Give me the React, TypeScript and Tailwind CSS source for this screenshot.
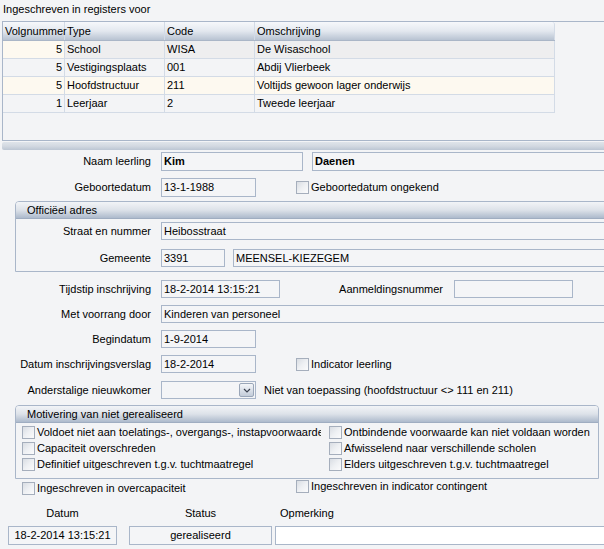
import React from 'react';

interface RegisterRow {
  nr: number;
  type: string;
  code: string;
  oms: string;
}

const registers: RegisterRow[] = [
  { nr: 5, type: 'School', code: 'WISA', oms: 'De Wisaschool' },
  { nr: 5, type: 'Vestigingsplaats', code: '001', oms: 'Abdij Vlierbeek' },
  { nr: 5, type: 'Hoofdstructuur', code: '211', oms: 'Voltijds gewoon lager onderwijs' },
  { nr: 1, type: 'Leerjaar', code: '2', oms: 'Tweede leerjaar' },
];

const box = 'border border-[#a9b6c9] bg-[#f4f5f7] flex items-center px-[2px] shrink-0 overflow-hidden whitespace-nowrap';

const Checkbox: React.FC = () => (
  <span className="block w-[13px] h-[13px] shrink-0 border border-[#a5aebc] bg-gradient-to-br from-[#d9dde3] via-[#eef0f3] to-[#fbfbfc]" />
);

const CheckItem: React.FC<{ text: string }> = ({ text }) => (
  <div className="flex items-center gap-[2px] whitespace-nowrap">
    <Checkbox />
    <span>{text}</span>
  </div>
);

const Label: React.FC<{ w: string; children: React.ReactNode }> = ({ w, children }) => (
  <div className={`${w} shrink-0 text-right whitespace-nowrap`}>{children}</div>
);

const App: React.FC = () => {
  const cell = 'h-full flex items-center px-[2px] border-r border-[#d3dbe6] shrink-0';
  return (
    <div className="w-[604px] h-[549px] overflow-hidden bg-[#f3f4f6] text-[11px] leading-[13px] text-black font-['Liberation_Sans',Arial,sans-serif]">
      <div className="h-[21px] pt-[3px] pl-[3px]">Ingeschreven in registers voor</div>

      {/* register table */}
      <div className="ml-[2px] h-[120px] border border-r-0 border-[#a9b6c9] bg-[#f3f4f6]">
        <div className="w-[552px]">
          <div className="flex h-[19px] bg-gradient-to-b from-[#f6f8fb] via-[#e3e8ef] to-[#b8c3d2] border-b border-[#aab6c7]">
            <div className={`${cell} w-[62px] border-[#c5cedb]`}>Volgnummer</div>
            <div className={`${cell} w-[100px] border-[#c5cedb]`}>Type</div>
            <div className={`${cell} w-[90px] border-[#c5cedb]`}>Code</div>
            <div className={`${cell} w-[300px] border-[#c5cedb] rounded-tr-[3px]`}>Omschrijving</div>
          </div>
          {registers.map((r, i) => {
            const cream = i % 2 === 0;
            const rest = i === 0 ? 'bg-[#eeeeef]' : cream ? 'bg-[#fdf9f0]' : 'bg-[#f3f4f6]';
            return (
              <div key={i} className="flex h-[18px] border-b border-[#d3dbe6]">
                <div className={`${cell} w-[62px] justify-end ${cream ? 'bg-[#fdf9f0]' : 'bg-[#f3f4f6]'}`}>{r.nr}</div>
                <div className={`${cell} w-[100px] ${rest}`}>{r.type}</div>
                <div className={`${cell} w-[90px] ${rest}`}>{r.code}</div>
                <div className={`${cell} w-[300px] ${rest}`}>{r.oms}</div>
              </div>
            );
          })}
        </div>
      </div>

      {/* splitter */}
      <div className="ml-[2px] mt-[1px] h-[8px] bg-gradient-to-b from-[#dfe4ea] via-[#d3d9e1] to-[#bcc6d3] rounded-l-[2px]" />

      {/* naam */}
      <div className="mt-[2px] flex items-center h-[19px]">
        <Label w="w-[151px]">Naam leerling</Label>
        <div className={`${box} ml-[10px] w-[142px] h-[19px] font-bold`}>Kim</div>
        <div className={`${box} ml-[9px] w-[300px] h-[19px] font-bold`}>Daenen</div>
      </div>

      <div className="mt-[7px] flex items-center h-[19px]">
        <Label w="w-[151px]">Geboortedatum</Label>
        <div className={`${box} ml-[10px] w-[95px] h-[19px]`}>13-1-1988</div>
        <div className="ml-[40px]">
          <CheckItem text="Geboortedatum ongekend" />
        </div>
      </div>

      {/* officieel adres */}
      <div className="mt-[4px] ml-[15px] w-[600px] border border-[#a9b6c9] rounded-tl-[4px]">
        <div className="h-[17px] pl-[11px] flex items-center bg-gradient-to-b from-[#f2f4f7] via-[#dde2e9] to-[#adbacc] border-b border-[#9fadc1] rounded-tl-[3px]">
          Officiëel adres
        </div>
        <div className="pt-[3px] pb-[4px]">
          <div className="flex items-center h-[18px]">
            <Label w="w-[135px]">Straat en nummer</Label>
            <div className={`${box} ml-[10px] w-[460px] h-[18px]`}>Heibosstraat</div>
          </div>
          <div className="mt-[9px] flex items-center h-[18px]">
            <Label w="w-[135px]">Gemeente</Label>
            <div className={`${box} ml-[10px] w-[64px] h-[18px]`}>3391</div>
            <div className={`${box} ml-[8px] w-[400px] h-[18px]`}>MEENSEL-KIEZEGEM</div>
          </div>
        </div>
      </div>

      <div className="mt-[8px] flex items-center h-[18px]">
        <Label w="w-[151px]">Tijdstip inschrijving</Label>
        <div className={`${box} ml-[10px] w-[119px] h-[18px]`}>18-2-2014 13:15:21</div>
        <Label w="w-[163px]">Aanmeldingsnummer</Label>
        <div className={`${box} ml-[11px] w-[119px] h-[18px]`} />
      </div>

      <div className="mt-[7px] flex items-center h-[18px]">
        <Label w="w-[151px]">Met voorrang door</Label>
        <div className={`${box} ml-[10px] w-[460px] h-[18px]`}>Kinderen van personeel</div>
      </div>

      <div className="mt-[7px] flex items-center h-[18px]">
        <Label w="w-[151px]">Begindatum</Label>
        <div className={`${box} ml-[10px] w-[95px] h-[18px]`}>1-9-2014</div>
      </div>

      <div className="mt-[7px] flex items-center h-[18px]">
        <Label w="w-[151px]">Datum inschrijvingsverslag</Label>
        <div className={`${box} ml-[10px] w-[95px] h-[18px]`}>18-2-2014</div>
        <div className="ml-[40px]">
          <CheckItem text="Indicator leerling" />
        </div>
      </div>

      <div className="mt-[8px] flex items-center h-[18px]">
        <Label w="w-[151px]">Anderstalige nieuwkomer</Label>
        <div className={`${box} ml-[10px] w-[95px] h-[18px] justify-end pr-[1px]`}>
          <span className="w-[15px] h-[14px] rounded-[2px] border border-[#9aa6b8] bg-gradient-to-b from-[#f4f6f9] to-[#c3ccd9] flex items-center justify-center">
            <svg width="8" height="5" viewBox="0 0 8 5">
              <path d="M1 1 L4 4 L7 1" fill="none" stroke="#3b4250" strokeWidth="1.2" />
            </svg>
          </span>
        </div>
        <div className="ml-[8px] whitespace-nowrap">Niet van toepassing (hoofdstructuur &lt;&gt; 111 en 211)</div>
      </div>

      {/* motivering */}
      <div className="mt-[6px] ml-[15px] w-[584px] border border-[#a9b6c9] rounded-t-[4px]">
        <div className="h-[17px] pl-[11px] flex items-center bg-gradient-to-b from-[#f2f4f7] via-[#dde2e9] to-[#adbacc] border-b border-[#9fadc1] rounded-t-[3px]">
          Motivering van niet gerealiseerd
        </div>
        <div className="pt-[1px] pb-[6px] pl-[6px]">
          {[
            ['Voldoet niet aan toelatings-, overgangs-, instapvoorwaarden', 'Ontbindende voorwaarde kan niet voldaan worden'],
            ['Capaciteit overschreden', 'Afwisselend naar verschillende scholen'],
            ['Definitief uitgeschreven t.g.v. tuchtmaatregel', 'Elders uitgeschreven t.g.v. tuchtmaatregel'],
          ].map(([a, b], i) => (
            <div key={i} className="flex items-center h-[16px]">
              <div className="w-[299px] overflow-hidden shrink-0">
                <CheckItem text={a} />
              </div>
              <div className="ml-[8px]">
                <CheckItem text={b} />
              </div>
            </div>
          ))}
        </div>
      </div>

      <div className="mt-[1px] flex items-start h-[16px] pl-[22px]">
        <div className="w-[274px] mt-[2px] shrink-0">
          <CheckItem text="Ingeschreven in overcapaciteit" />
        </div>
        <CheckItem text="Ingeschreven in indicator contingent" />
      </div>

      <div className="mt-[11px] flex items-center h-[12px]">
        <div className="ml-[8px] w-[109px] text-center">Datum</div>
        <div className="ml-[12px] w-[143px] text-center">Status</div>
        <div className="ml-[8px]">Opmerking</div>
      </div>

      <div className="mt-[7px] flex items-center h-[19px]">
        <div className={`${box} ml-[8px] w-[109px] h-[19px] justify-center`}>18-2-2014 13:15:21</div>
        <div className={`${box} ml-[12px] w-[143px] h-[19px] justify-center`}>gerealiseerd</div>
        <div className={`${box} ml-[3px] w-[340px] h-[19px] bg-white`} />
      </div>
    </div>
  );
};

export default App;
